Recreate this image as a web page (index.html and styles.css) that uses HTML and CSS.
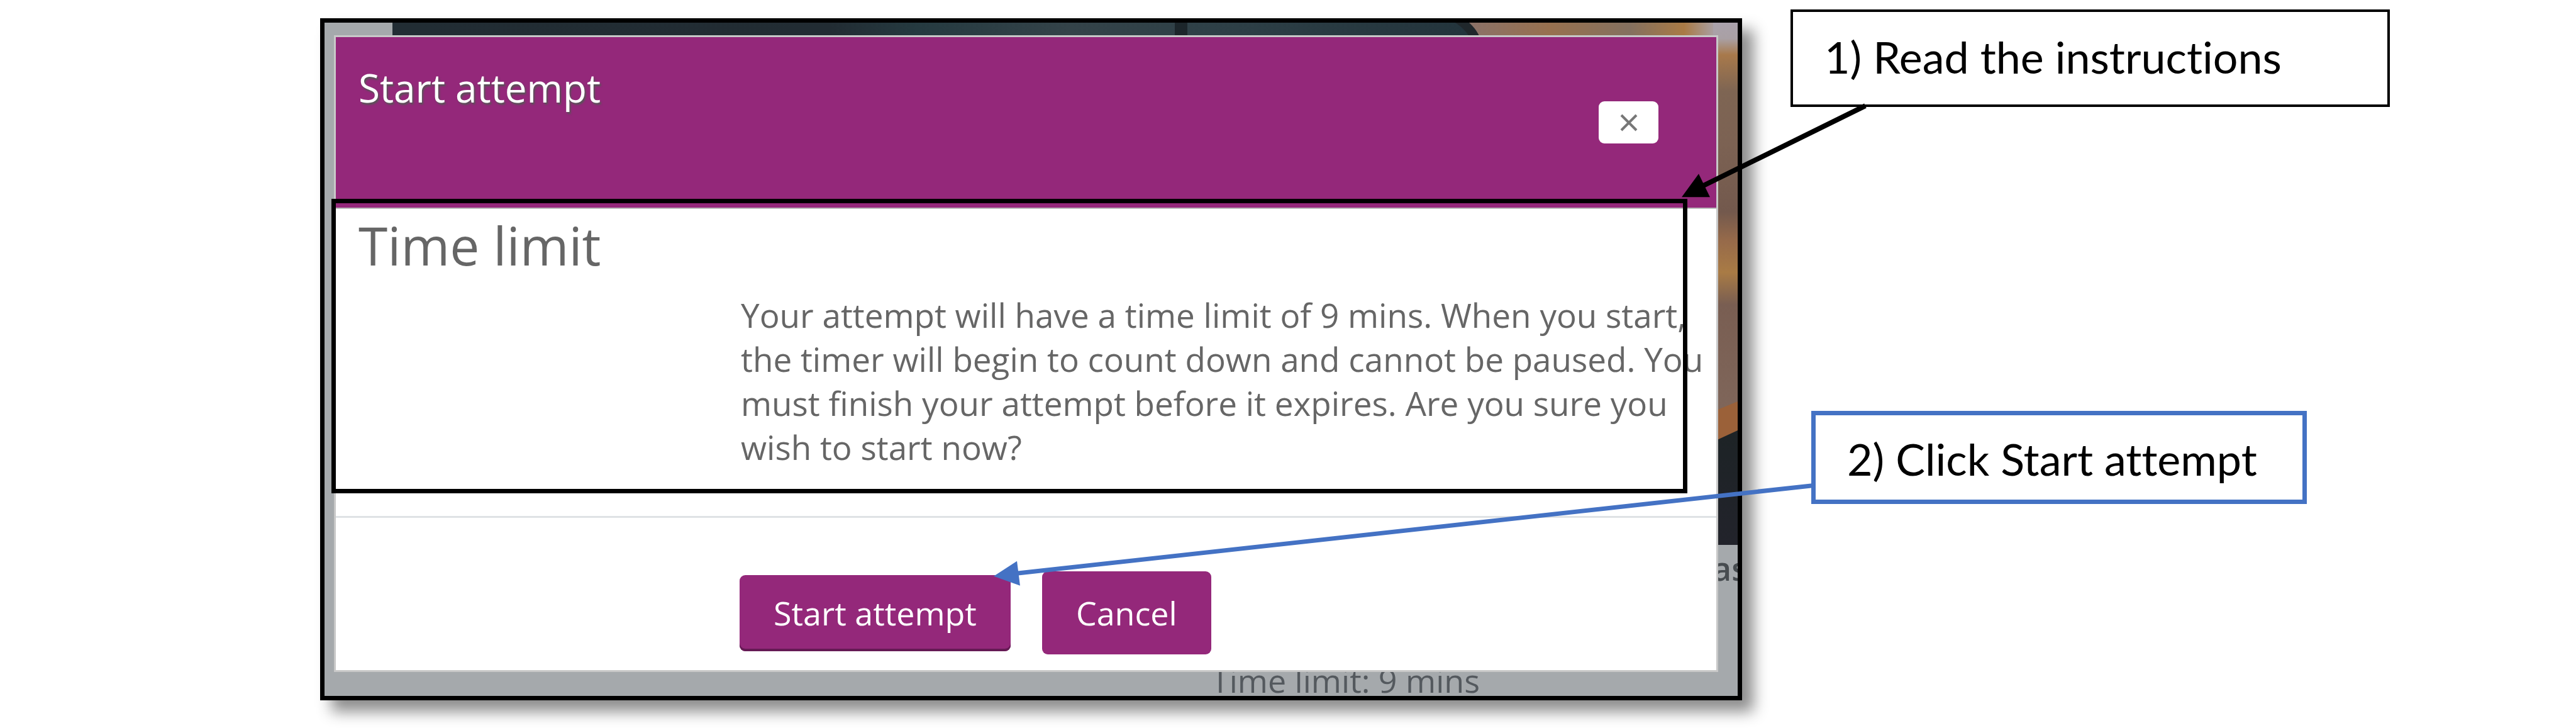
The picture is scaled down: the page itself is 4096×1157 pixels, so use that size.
FILE: index.html
```html
<!DOCTYPE html>
<html lang="en">
<head>
<meta charset="utf-8">
<title>Start attempt</title>
<link rel="stylesheet" href="styles.css">
</head>
<body>
<main class="guide">
  <section class="screen">
    <svg class="photo" viewBox="0 0 2139 830" preserveAspectRatio="none" aria-hidden="true">
      <defs>
        <linearGradient id="wall" x1="0" x2="1" y1="0" y2="0">
          <stop offset="0" stop-color="#222d34"/>
          <stop offset=".4" stop-color="#222c33"/>
          <stop offset=".48" stop-color="#253a40"/>
          <stop offset=".62" stop-color="#344349"/>
          <stop offset=".75" stop-color="#2e4047"/>
          <stop offset="1" stop-color="#22333b"/>
        </linearGradient>
        <linearGradient id="skin" x1="0" x2="1" y1="0" y2="0">
          <stop offset="0" stop-color="#8b7268"/>
          <stop offset=".3" stop-color="#97704f"/>
          <stop offset=".6" stop-color="#84705f"/>
          <stop offset=".8" stop-color="#a97a45"/>
          <stop offset=".92" stop-color="#a9a1a8"/>
          <stop offset="1" stop-color="#aaa2ac"/>
        </linearGradient>
        <linearGradient id="arm" x1="0" x2="0" y1="0" y2="1">
          <stop offset="0" stop-color="#aaa2ac"/>
          <stop offset=".04" stop-color="#a9a0a4"/>
          <stop offset=".08" stop-color="#a8794b"/>
          <stop offset=".17" stop-color="#7e6553"/>
          <stop offset=".3" stop-color="#7c6253"/>
          <stop offset=".47" stop-color="#73594d"/>
          <stop offset=".54" stop-color="#966a4a"/>
          <stop offset=".62" stop-color="#a97b45"/>
          <stop offset=".7" stop-color="#795e52"/>
          <stop offset="1" stop-color="#80675b"/>
        </linearGradient>
        <linearGradient id="sleeve" x1="0" x2="0" y1="0" y2="1">
          <stop offset="0" stop-color="#1d2326"/>
          <stop offset="1" stop-color="#22232b"/>
        </linearGradient>
      </defs>
      <rect width="1740" height="40" fill="url(#wall)"/>
      <rect x="1244" width="20" height="40" fill="#1c262b"/>
      <path d="M1680 0H1740V40H1722Q1710 12 1690 0Z" fill="#20272b"/>
      <path d="M1712 0H2139V40H1734Q1730 16 1712 0Z" fill="url(#skin)"/>
      <rect x="2100" width="39" height="640" fill="url(#arm)"/>
      <path d="M2100 618L2139 602V658L2100 672Z" fill="#9b6139"/>
      <path d="M2100 666L2139 648V830H2100Z" fill="url(#sleeve)"/>
    </svg>
    <p class="behind behind-side">as</p>
    <p class="behind behind-limit">Time limit: 9 mins</p>

    <div class="modal" role="dialog" aria-labelledby="modal-title">
      <header class="modal-header">
        <h1 class="modal-title" id="modal-title">Start attempt</h1>
        <button class="close" type="button" aria-label="Close">
          <svg class="close-icon" viewBox="0 0 28 28" aria-hidden="true"><path d="M2 2L26 26M26 2L2 26"/></svg>
        </button>
      </header>
      <div class="modal-body">
        <h2 class="section-title">Time limit</h2>
        <p class="message">Your attempt will have a time limit of 9 mins. When you start, the timer will begin to count down and cannot be paused. You must finish your attempt before it expires. Are you sure you wish to start now?</p>
        <div class="highlight"></div>
      </div>
      <footer class="modal-footer">
        <button class="action action-start" type="button">Start attempt</button>
        <button class="action action-cancel" type="button">Cancel</button>
      </footer>
    </div>
  </section>

  <aside class="notes">
    <p class="note note-read">1) Read the instructions</p>
    <p class="note note-click">2) Click Start attempt</p>
  </aside>

  <svg class="arrows" viewBox="0 0 4096 1157" preserveAspectRatio="none" aria-hidden="true">
    <path d="M2966 168L2706 296" stroke="#000" stroke-width="8"/>
    <path d="M2674 313L2701 276L2719 313Z" fill="#000"/>
    <path d="M2882 771L1612 911" stroke="#4472c4" stroke-width="7"/>
    <path d="M1580 915L1617 891L1622 930Z" fill="#4472c4"/>
  </svg>
</main>
</body>
</html>
```
FILE: styles.css
```css
* {
  box-sizing: border-box;
}

body {
  margin: 0;
  background: #fff;
  color: #666;
  font-family: "Open Sans", sans-serif;
  font-size: 52px;
  line-height: 70px;
}

h1, h2, p {
  margin: 0;
  font-weight: 400;
}

.guide {
  position: relative;
  display: grid;
  grid-template-columns: 509fr 2261fr 77fr 953fr 296fr;
  align-items: start;
  padding: 15px 0 45px;
}

/* Captured window with the page dimmed behind the dialog */
.screen {
  grid-column: 2;
  position: relative;
  margin-top: 14px;
  padding: 20px 31px 38px 15px;
  border: 7px solid #000;
  background: #a5a9ac;
  box-shadow: 18px 18px 22px rgba(0, 0, 0, .45);
}

.photo {
  position: absolute;
  top: 0;
  left: 108px;
  width: calc(100% - 108px);
  height: 830px;
}

.behind {
  position: absolute;
  color: #54595e;
  white-space: nowrap;
}

.behind-side {
  right: 0;
  bottom: 168px;
  width: 40px;
  overflow: hidden;
  color: #474c50;
  font-weight: 600;
}

.behind-limit {
  left: 1410px;
  bottom: -10px;
}

.modal {
  position: relative;
  border: 3px solid #c8c8c8;
  background: #fff;
}

.modal-header {
  display: flex;
  justify-content: space-between;
  align-items: center;
  min-height: 271px;
  padding: 40px 92px 40px 36px;
  background: #94287a;
}

.modal-title {
  align-self: flex-start;
  color: #fff;
  font-size: 62px;
  font-weight: 500;
  line-height: 80px;
  text-shadow: 2px 3px 3px #555;
}

.close {
  display: flex;
  justify-content: center;
  align-items: center;
  width: 95px;
  height: 67px;
  padding: 0;
  border: 0;
  border-radius: 9px;
  background: #fff;
}

.close-icon {
  width: 28px;
  height: 28px;
  fill: none;
  stroke: #777;
  stroke-width: 4px;
}

.modal-body {
  position: relative;
  padding: 8px 14px 74px 36px;
  border-top: 2px solid #bbb;
  border-bottom: 3px solid #dfe2e5;
}

.section-title {
  font-size: 84px;
  line-height: 100px;
}

.message {
  margin-top: 26px;
  padding-left: 608px;
  font-size: 53px;
}

.highlight {
  position: absolute;
  top: -16px;
  right: 46px;
  bottom: 36px;
  left: -7px;
  border: 7px solid #000;
}

.modal-footer {
  display: flex;
  align-items: center;
  gap: 50px;
  padding: 85px 36px 25px 642px;
}

.action {
  height: 132px;
  padding: 0 54px;
  border: 0;
  border-radius: 9px;
  background: #94287a;
  color: #fff;
  font: inherit;
}

.action-start {
  height: 121px;
  box-shadow: inset 0 -4px 0 #651a54;
}

/* Callouts */
.notes {
  grid-column: 4;
  display: flex;
  flex-direction: column;
  align-items: flex-start;
  color: #000;
  font-family: Lato, sans-serif;
  font-size: 70px;
  line-height: 80px;
  font-variant-ligatures: none;
}

.note {
  background: #fff;
}

.note-read {
  width: 100%;
  padding: 31px 50px 36px;
  border: 4px solid #000;
}

.note-click {
  margin: 483px 0 0 33px;
  padding: 29px 0 25px 50px;
  width: 788px;
  border: 7px solid #4472c4;
}

.arrows {
  position: absolute;
  inset: 0;
  width: 100%;
  height: 100%;
  fill: none;
  pointer-events: none;
}
```
